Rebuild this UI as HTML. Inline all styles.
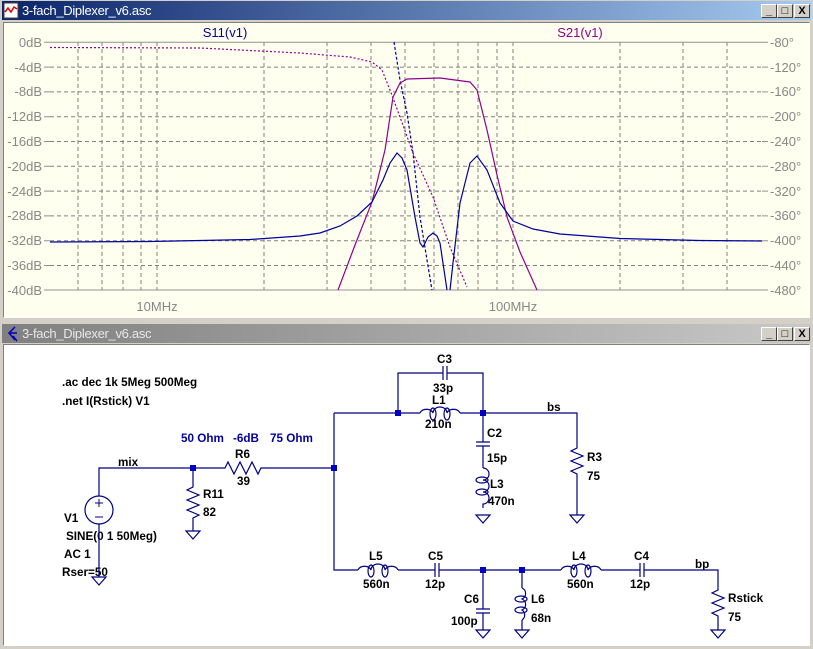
<!DOCTYPE html>
<html><head><meta charset="utf-8"><style>
body{margin:0;width:813px;height:649px;background:#d4d0c8;position:relative;overflow:hidden;font-family:"Liberation Sans",sans-serif}
.tb{position:absolute;left:2px;width:809px;height:19px;color:#fff;font-size:13px;line-height:19px}
.tb span{position:absolute;left:20px;top:0;letter-spacing:-0.3px}
.btn{position:absolute;top:3px;width:14px;height:12px;background:#d4d0c8;border:1px solid;border-color:#fff #404040 #404040 #fff;color:#000;font-size:11px;line-height:12px;text-align:center;font-weight:bold}
svg{position:absolute;left:0;top:0}
</style></head><body>
<div class="tb" style="top:1px;background:linear-gradient(90deg,#0a246a,#a6caf0)"><span>3-fach_Diplexer_v6.asc</span>
<div class="btn" style="left:759px">_</div><div class="btn" style="left:775px">□</div><div class="btn" style="left:792px">X</div></div>
<div class="tb" style="top:324px;background:linear-gradient(90deg,#808080,#c8c8c8);color:#e8e8e8"><span>3-fach_Diplexer_v6.asc</span>
<div class="btn" style="left:759px">_</div><div class="btn" style="left:775px">□</div><div class="btn" style="left:792px">X</div></div>
<div style="position:absolute;left:3px;top:22px;width:805px;height:294px;background:#ffffef;border:1px solid;border-color:#808080 #fff #fff #808080"></div>
<div style="position:absolute;left:3px;top:344px;width:805px;height:300px;background:#fff;border:1px solid;border-color:#808080 #fff #fff #808080"></div>
<svg width="813" height="649" xmlns="http://www.w3.org/2000/svg">
<rect x="4" y="3" width="14" height="15" fill="#fff" stroke="#404040"/><path d="M5 12 L8 8 L11 12 L14 7 L17 9" stroke="#e00000" fill="none" stroke-width="1.5"/>
<path d="M15 327 L9 333 L15 340 M9 333 L17 333 M13 336 L17 341" stroke="#0000c0" fill="none" stroke-width="1.5"/>
<g font-family="Liberation Sans" font-size="13" fill="#888">
<g stroke="#808080" stroke-dasharray="4,3" stroke-width="1">
<path d="M50 67.1H762M50 91.9H762M50 116.7H762M50 141.5H762M50 166.3H762M50 191.1H762M50 215.9H762M50 240.7H762M50 265.5H762"/>
<path d="M78 42V290M102 42V290M123 42V290M141 42V290M157 42V290M264 42V290M327 42V290M371 42V290M405 42V290M434 42V290M458 42V290M478 42V290M497 42V290M513 42V290M620 42V290M683 42V290M727 42V290"/>
</g>
<path d="M50 42.3H762M50 290H762" stroke="#909090"/>
<path d="M44 42.3h6M44 67.1h6M44 91.9h6M44 116.7h6M44 141.5h6M44 166.3h6M44 191.1h6M44 215.9h6M44 240.7h6M44 265.5h6M44 290h6M762 42.3h6M762 67.1h6M762 91.9h6M762 116.7h6M762 141.5h6M762 166.3h6M762 191.1h6M762 215.9h6M762 240.7h6M762 265.5h6M762 290h6" stroke="#909090"/>
<g text-anchor="end"><text x="42" y="47">0dB</text><text x="42" y="72">-4dB</text><text x="42" y="96">-8dB</text><text x="42" y="121">-12dB</text><text x="42" y="146">-16dB</text><text x="42" y="171">-20dB</text><text x="42" y="196">-24dB</text><text x="42" y="220">-28dB</text><text x="42" y="245">-32dB</text><text x="42" y="270">-36dB</text><text x="42" y="295">-40dB</text></g>
<g><text x="770" y="47">-80°</text><text x="770" y="72">-120°</text><text x="770" y="96">-160°</text><text x="770" y="121">-200°</text><text x="770" y="146">-240°</text><text x="770" y="171">-280°</text><text x="770" y="196">-320°</text><text x="770" y="220">-360°</text><text x="770" y="245">-400°</text><text x="770" y="270">-440°</text><text x="770" y="295">-480°</text></g>
<text x="157" y="311" text-anchor="middle">10MHz</text><text x="513" y="311" text-anchor="middle">100MHz</text>
<text x="225" y="37" text-anchor="middle" fill="#0000a0">S11(v1)</text><text x="580" y="37" text-anchor="middle" fill="#900090">S21(v1)</text>
</g>
<g fill="none" stroke-width="1.2">
<path d="M50 47.5 L200 48 L300 53 L350 57 L372 62 L382 70 L390 90 L400 117 L413 153 L433 197 L450 247 L467 287" stroke="#900090" stroke-dasharray="2,2"/>
<path d="M394 42 L400 80 L407 113 L413 153 L420 217 L427 260 L432 290" stroke="#0000a0" stroke-dasharray="3,2"/>
<path d="M338 290 L355 245 L372 202 L385 150 L393 97 L400 83 L407 79 L440 78 L470 82 L477 90 L487 130 L497 175 L507 217 L520 252 L537 290" stroke="#900090"/>
<path d="M50 242 L150 241.5 L250 239.5 L300 236 L320 233 L340 226 L357 216 L372 202 L383 180 L390 163 L397 153 L402 158 L407 170 L415 217 L420 243 L423 247 L428 237 L433 233 L437 236 L440 243 L447 290 M450 290 L453 263 L460 203 L470 163 L477 156 L487 170 L500 203 L513 221 L533 229 L560 234 L620 238.5 L700 240.5 L762 241" stroke="#0000a0"/>
</g>
<g font-family="Liberation Sans" font-size="11.7" font-weight="bold" fill="#000">
<text x="62" y="386">.ac dec 1k 5Meg 500Meg</text><text x="62" y="405">.net I(Rstick) V1</text>
<g fill="#0000a0"><text x="181" y="442">50 Ohm</text><text x="233" y="442">-6dB</text><text x="270" y="442">75 Ohm</text></g>
<text x="118" y="466">mix</text><text x="235" y="458">R6</text><text x="237" y="485">39</text>
<text x="203" y="498">R11</text><text x="203" y="516">82</text>
<text x="64" y="522">V1</text><text x="66" y="540">SINE(0 1 50Meg)</text><text x="64" y="558">AC 1</text><text x="62" y="576">Rser=50</text>
<text x="437" y="363">C3</text><text x="433" y="392">33p</text><text x="432" y="404">L1</text><text x="425" y="428">210n</text>
<text x="487" y="437">C2</text><text x="487" y="462">15p</text><text x="490" y="488">L3</text><text x="488" y="505">470n</text>
<text x="547" y="411">bs</text><text x="587" y="461">R3</text><text x="587" y="480">75</text>
<text x="369" y="560">L5</text><text x="363" y="588">560n</text><text x="428" y="560">C5</text><text x="425" y="588">12p</text>
<text x="464" y="603">C6</text><text x="451" y="625">100p</text><text x="531" y="603">L6</text><text x="531" y="622">68n</text>
<text x="572" y="560">L4</text><text x="567" y="588">560n</text><text x="634" y="560">C4</text><text x="630" y="588">12p</text>
<text x="695" y="568">bp</text><text x="728" y="602">Rstick</text><text x="728" y="621">75</text>
</g>
<g fill="none" stroke="#000080" stroke-width="1.2">
<path d="M99 577V524M99 496V468H225l3-6 6 12 6-12 6 12 6-12 6 12 3-6H334"/>
<circle cx="99" cy="510" r="14"/><path d="M95 503h8M99 499v8M95 517h8" stroke-width="1"/>
<path d="M193 468V487l-6 3 12 5-12 5 12 5-12 5 12 5-6 3V531"/>
<path d="M334 413V570H358M398 570H435M439 570H561M601 570H640M644 570H718V590l-6 3 12 5-12 5 12 5-12 5 6 3V630"/>
<path d="M334 413H420M460 413H577V448l-6 3 12 5-12 5 12 5-12 5 6 3V515"/>
<path d="M398 413V373H443M447 373H483V442M483 446V468M443 366V380M447 366V380"/>
<path d="M476 442H490M476 446H490"/>
<path d="M435 563V577M439 563V577M640 563V577M644 563V577"/>
<path d="M483 570V609M476 609H490M476 613H490M483 613V630M522 570V588M522 620V630"/>
<path d="M420 413a7 6 0 0 1 13 0a7 6 0 0 1 14 0a7 6 0 0 1 13 0"/><ellipse cx="433" cy="414" rx="3" ry="6"/><ellipse cx="447" cy="414" rx="3" ry="6"/>
<path d="M358 570a7 6 0 0 1 13 0a7 6 0 0 1 14 0a7 6 0 0 1 13 0"/><ellipse cx="371" cy="571" rx="3" ry="6"/><ellipse cx="385" cy="571" rx="3" ry="6"/>
<path d="M561 570a7 6 0 0 1 13 0a7 6 0 0 1 14 0a7 6 0 0 1 13 0"/><ellipse cx="574" cy="571" rx="3" ry="6"/><ellipse cx="588" cy="571" rx="3" ry="6"/>
<path d="M483 468a6 6 0 0 1 0 12a6 6 0 0 1 0 12a6 6 0 0 1 0 12V508"/><ellipse cx="482" cy="480" rx="6" ry="3"/><ellipse cx="482" cy="492" rx="6" ry="3"/>
<path d="M522 588a6 6 0 0 1 0 11a6 6 0 0 1 0 11a6 6 0 0 1 0 10"/><ellipse cx="521" cy="599" rx="6" ry="3"/><ellipse cx="521" cy="610" rx="6" ry="3"/>
<path d="M92 577h14l-7 8z M186 531h14l-7 8z M476 515h14l-7 8z M570 515h14l-7 8z M476 630h14l-7 8z M515 630h14l-7 8z M711 630h14l-7 8z"/>
</g>
<g fill="#0000c0"><rect x="190" y="465" width="6" height="6"/><rect x="331" y="465" width="6" height="6"/><rect x="395" y="410" width="6" height="6"/><rect x="480" y="410" width="6" height="6"/><rect x="480" y="567" width="6" height="6"/><rect x="519" y="567" width="6" height="6"/></g>
</svg>
</body></html>
